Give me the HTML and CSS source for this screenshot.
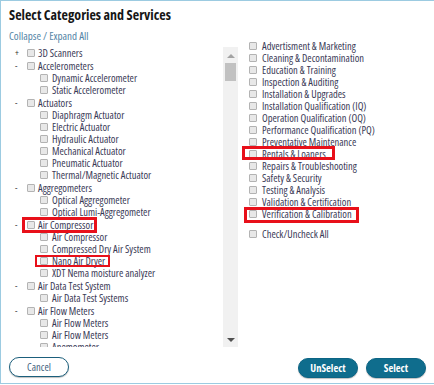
FILE: index.html
```html
<!DOCTYPE html>
<html>
<head>
<meta charset="utf-8">
<link rel="stylesheet" href="styles.css">
</head>
<body>
<div class="modal">
  <h1 class="title">Select Categories and Services</h1>
  <div class="columns">
    <div class="left-col">
      <a class="collapse-link">Collapse / Expand All</a>
      <div class="panel">
        <div class="tree">
          <div class="row top first"><span class="tog">+</span><span class="cb"></span><span class="lbl">3D Scanners</span></div>
          <div class="row top"><span class="tog">-</span><span class="cb"></span><span class="lbl">Accelerometers</span></div>
          <div class="row child"><span class="cb"></span><span class="lbl">Dynamic Accelerometer</span></div>
          <div class="row child"><span class="cb"></span><span class="lbl">Static Accelerometer</span></div>
          <div class="row top"><span class="tog">-</span><span class="cb"></span><span class="lbl">Actuators</span></div>
          <div class="row child"><span class="cb"></span><span class="lbl">Diaphragm Actuator</span></div>
          <div class="row child"><span class="cb"></span><span class="lbl">Electric Actuator</span></div>
          <div class="row child"><span class="cb"></span><span class="lbl">Hydraulic Actuator</span></div>
          <div class="row child"><span class="cb"></span><span class="lbl">Mechanical Actuator</span></div>
          <div class="row child"><span class="cb"></span><span class="lbl">Pneumatic Actuator</span></div>
          <div class="row child"><span class="cb"></span><span class="lbl">Thermal/Magnetic Actuator</span></div>
          <div class="row top"><span class="tog">-</span><span class="cb"></span><span class="lbl">Aggregometers</span></div>
          <div class="row child"><span class="cb"></span><span class="lbl">Optical Aggregometer</span></div>
          <div class="row child"><span class="cb"></span><span class="lbl">Optical Lumi-Aggregometer</span></div>
          <div class="row top hl hl-ac"><span class="tog">-</span><span class="cb"></span><span class="lbl">Air Compressor</span></div>
          <div class="row child"><span class="cb"></span><span class="lbl">Air Compressor</span></div>
          <div class="row child"><span class="cb"></span><span class="lbl">Compressed Dry Air System</span></div>
          <div class="row child hl hl-nano"><span class="cb"></span><span class="lbl">Nano Air Dryer</span></div>
          <div class="row child"><span class="cb"></span><span class="lbl">XDT Nema moisture analyzer</span></div>
          <div class="row top"><span class="tog">-</span><span class="cb"></span><span class="lbl">Air Data Test System</span></div>
          <div class="row child"><span class="cb"></span><span class="lbl">Air Data Test Systems</span></div>
          <div class="row top"><span class="tog">-</span><span class="cb"></span><span class="lbl">Air Flow Meters</span></div>
          <div class="row child"><span class="cb"></span><span class="lbl">Air Flow Meters</span></div>
          <div class="row child"><span class="cb"></span><span class="lbl">Air Flow Meters</span></div>
          <div class="row child"><span class="cb"></span><span class="lbl">Anemometer</span></div>
          <div class="row child"><span class="cb"></span><span class="lbl">Anemometer</span></div>
        </div>
        <div class="scrollbar">
          <div class="sb-btn"><span class="arrow-up"></span></div>
          <div class="sb-thumb"></div>
          <div class="sb-space"></div>
          <div class="sb-btn"><span class="arrow-down"></span></div>
        </div>
      </div>
    </div>
    <div class="right-col">
      <div class="row svc"><span class="cb"></span><span class="lbl">Advertisment &amp; Marketing</span></div>
      <div class="row svc"><span class="cb"></span><span class="lbl">Cleaning &amp; Decontamination</span></div>
      <div class="row svc"><span class="cb"></span><span class="lbl">Education &amp; Training</span></div>
      <div class="row svc"><span class="cb"></span><span class="lbl">Inspection &amp; Auditing</span></div>
      <div class="row svc"><span class="cb"></span><span class="lbl">Installation &amp; Upgrades</span></div>
      <div class="row svc"><span class="cb"></span><span class="lbl">Installation Qualification (IQ)</span></div>
      <div class="row svc"><span class="cb"></span><span class="lbl">Operation Qualification (OQ)</span></div>
      <div class="row svc"><span class="cb"></span><span class="lbl">Performance Qualification (PQ)</span></div>
      <div class="row svc"><span class="cb"></span><span class="lbl">Preventative Maintenance</span></div>
      <div class="row svc hl hl-rent"><span class="cb"></span><span class="lbl">Rentals &amp; Loaners</span></div>
      <div class="row svc"><span class="cb"></span><span class="lbl">Repairs &amp; Troubleshooting</span></div>
      <div class="row svc"><span class="cb"></span><span class="lbl">Safety &amp; Security</span></div>
      <div class="row svc"><span class="cb"></span><span class="lbl">Testing &amp; Analysis</span></div>
      <div class="row svc"><span class="cb"></span><span class="lbl">Validation &amp; Certification</span></div>
      <div class="row svc hl hl-ver"><span class="cb"></span><span class="lbl">Verification &amp; Calibration</span></div>
      <div class="row svc check-all"><span class="cb"></span><span class="lbl">Check/Uncheck All</span></div>
    </div>
  </div>
  <div class="footer">
    <button class="btn btn-outline">Cancel</button>
    <div class="footer-right">
      <button class="btn btn-solid">UnSelect</button>
      <button class="btn btn-solid">Select</button>
    </div>
  </div>
</div>
</body>
</html>
```

FILE: styles.css
```css
* { box-sizing: border-box; }
html, body { margin: 0; padding: 0; background: #fff; }
body {
  font-family: "Open Sans", "Noto Sans", sans-serif;
  font-stretch: 75%;
  font-size: 10.5px;
  color: #3a3a56;
}
.modal {
  width: 434px;
  height: 384px;
  border: 1px solid #9ccbe1;
  border-right: none;
  padding: 5px 8px 0 8px;
  display: flex;
  flex-direction: column;
}
.title {
  margin: 0;
  font-size: 14px;
  line-height: 18px;
  font-weight: bold;
  color: #161616;
}
.columns {
  margin-top: 6px;
  display: flex;
}
.left-col {
  width: 229px;
  display: flex;
  flex-direction: column;
}
.collapse-link {
  display: block;
  font-size: 11px;
  line-height: 12px;
  height: 12px;
  color: #5485a6;
}
.panel {
  margin-top: 5px;
  height: 300px;
  display: flex;
}
.tree {
  flex: 1;
  overflow: hidden;
}
.row {
  position: relative;
  display: flex;
  align-items: center;
  height: 12px;
  line-height: 12px;
  white-space: nowrap;
}
.row.top { padding-left: 5px; margin-top: 1px; }
.row.top.first { margin-top: 0; }
.row.child { padding-left: 31px; }
.tog {
  width: 13px;
  font-size: 9px;
  color: #333;
  padding-left: 1px;
}
.cb {
  flex: none;
  width: 8px;
  height: 8px;
  border: 1px solid #b3b3b3;
  background: #e8e8e8;
  border-radius: 1px;
}
.row.top .cb { margin-right: 3px; }
.row.child .cb { margin-right: 4px; }
.row.svc .cb { margin-right: 5px; }

.scrollbar {
  width: 15px;
  background: #f1f1f1;
  display: flex;
  flex-direction: column;
}
.sb-btn {
  height: 15px;
  display: flex;
  align-items: center;
  justify-content: center;
}
.arrow-up {
  width: 0; height: 0;
  border-left: 4px solid transparent;
  border-right: 4px solid transparent;
  border-bottom: 4px solid #a3a3a3;
  margin-top: 2px;
}
.arrow-down {
  width: 0; height: 0;
  border-left: 4px solid transparent;
  border-right: 4px solid transparent;
  border-top: 4px solid #505050;
}
.sb-thumb {
  margin: 1px 2px 0 2px;
  height: 18px;
  background: #c1c1c1;
}
.sb-space { flex: 1; }

.right-col {
  padding-top: 10px;
  padding-left: 11px;
  flex: 1;
}
.row.check-all { margin-top: 8px; }

.hl::after {
  content: "";
  box-sizing: border-box;
  position: absolute;
  border: 3px solid #e8101a;
}
.hl-ac::after { left: 13px; top: -2px; width: 75px; height: 16px; }
.hl-nano::after { left: 26px; top: 0; width: 75px; height: 12px; border-width: 2px; }
.hl-rent::after { left: -7px; top: -2px; width: 93px; height: 14px; }
.hl-ver::after { left: -5px; top: -1px; width: 115px; height: 16px; }

.footer {
  margin-top: 10px;
  display: flex;
  justify-content: space-between;
}
.footer-right { display: flex; gap: 8px; }
.btn {
  width: 60px;
  height: 20px;
  border-radius: 10px;
  font-family: inherit;
  font-stretch: inherit;
  font-size: 10.5px;
  padding: 0;
  line-height: 18px;
  box-shadow: 0 1px 1px rgba(0,0,0,0.25);
}
.btn-outline {
  background: #fff;
  border: 1px solid #1b5f7c;
  color: #3f5f80;
}
.btn-solid {
  background: #0f6d8d;
  border: 1px solid #0c6585;
  color: #fff;
  font-weight: bold;
  margin-top: 1px;
}
```
